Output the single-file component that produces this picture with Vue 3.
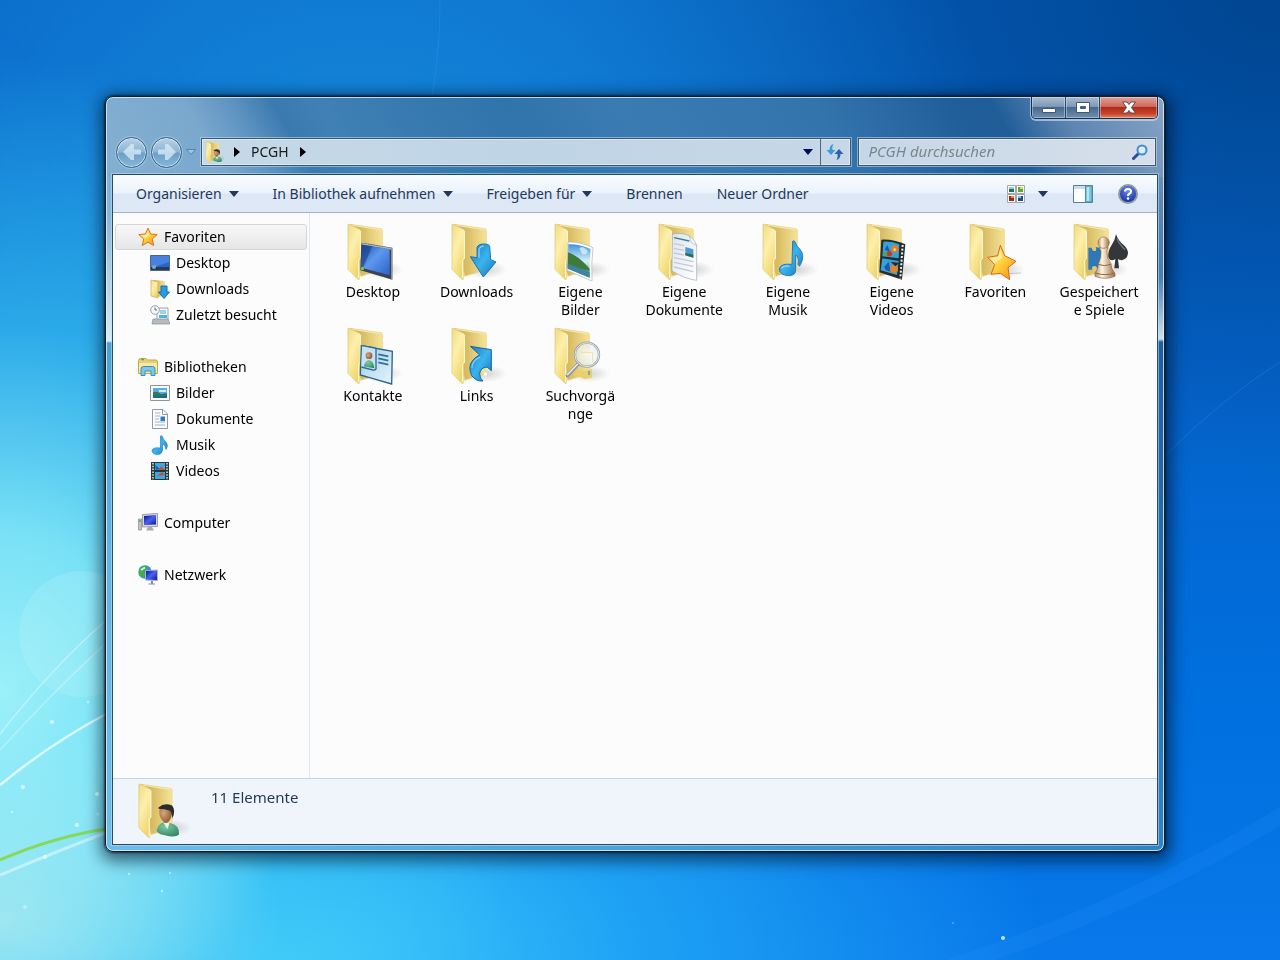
<script setup>
import { ref } from 'vue'

const query = ref('')

const commands = [
  { label: 'Organisieren', menu: true },
  { label: 'In Bibliothek aufnehmen', menu: true },
  { label: 'Freigeben für', menu: true },
  { label: 'Brennen', menu: false },
  { label: 'Neuer Ordner', menu: false },
]

const groups = [
  {
    label: 'Favoriten', icon: 'star', selected: true,
    children: [
      { label: 'Desktop', icon: 'desk' },
      { label: 'Downloads', icon: 'down' },
      { label: 'Zuletzt besucht', icon: 'recent' },
    ],
  },
  {
    label: 'Bibliotheken', icon: 'lib',
    children: [
      { label: 'Bilder', icon: 'pic' },
      { label: 'Dokumente', icon: 'doc' },
      { label: 'Musik', icon: 'note' },
      { label: 'Videos', icon: 'film' },
    ],
  },
  { label: 'Computer', icon: 'pc', children: [] },
  { label: 'Netzwerk', icon: 'net', children: [] },
]

const folders = [
  { label: 'Desktop', icon: 'f-desk' },
  { label: 'Downloads', icon: 'f-down' },
  { label: 'Eigene\nBilder', icon: 'f-pic' },
  { label: 'Eigene\nDokumente', icon: 'f-doc' },
  { label: 'Eigene\nMusik', icon: 'f-note' },
  { label: 'Eigene\nVideos', icon: 'f-film' },
  { label: 'Favoriten', icon: 'f-star' },
  { label: 'Gespeichert\ne Spiele', icon: 'f-game' },
  { label: 'Kontakte', icon: 'f-card' },
  { label: 'Links', icon: 'f-link' },
  { label: 'Suchvorgä\nnge', icon: 'f-find' },
]
</script>

<template>
  <svg class="defs" aria-hidden="true">
    <defs>
      <linearGradient id="gFlap" x1="0" y1="0" x2=".6" y2="1">
        <stop offset="0" stop-color="#f0d984" /><stop offset=".45" stop-color="#fdf0ac" /><stop offset="1" stop-color="#efd468" />
      </linearGradient>
      <linearGradient id="gBack" x1="0" y1="0" x2="1" y2="0">
        <stop offset="0" stop-color="#c9a848" /><stop offset=".45" stop-color="#dcc16a" /><stop offset="1" stop-color="#f5e498" />
      </linearGradient>
      <linearGradient id="gScreen" x1="0" y1="0" x2="1" y2="1">
        <stop offset="0" stop-color="#1c4fae" /><stop offset=".45" stop-color="#5e98ee" /><stop offset="1" stop-color="#2a62c8" />
      </linearGradient>
      <linearGradient id="gBlue" x1="0" y1="0" x2="1" y2="1">
        <stop offset="0" stop-color="#1a78bc" /><stop offset=".5" stop-color="#3ab4ee" /><stop offset="1" stop-color="#1572b8" />
      </linearGradient>
      <linearGradient id="gSky" x1="0" y1="0" x2="0" y2="1">
        <stop offset="0" stop-color="#3f93dc" /><stop offset=".5" stop-color="#d4effa" /><stop offset="1" stop-color="#4f94a8" />
      </linearGradient>
      <linearGradient id="gStar" x1="0" y1="0" x2="1" y2="1">
        <stop offset="0" stop-color="#fff6a0" /><stop offset=".5" stop-color="#ffd03a" /><stop offset="1" stop-color="#f58a14" />
      </linearGradient>
      <linearGradient id="gPawn" x1="0" y1="0" x2="1" y2="0">
        <stop offset="0" stop-color="#b08a62" /><stop offset=".35" stop-color="#fff6e2" /><stop offset="1" stop-color="#9a6a42" />
      </linearGradient>
      <linearGradient id="gPaper" x1="0" y1="0" x2="1" y2="1">
        <stop offset="0" stop-color="#dde4f0" /><stop offset="1" stop-color="#ffffff" />
      </linearGradient>
      <linearGradient id="gCard" x1="0" y1="0" x2="1" y2="1">
        <stop offset="0" stop-color="#9ecbe6" /><stop offset="1" stop-color="#e6f5fc" />
      </linearGradient>
      <linearGradient id="gNavy" x1="0" y1="0" x2="1" y2="1">
        <stop offset="0" stop-color="#0308a0" /><stop offset=".5" stop-color="#4a62ee" /><stop offset="1" stop-color="#0a0fa8" />
      </linearGradient>
      <radialGradient id="gHelp" cx=".5" cy=".3" r=".7">
        <stop offset="0" stop-color="#6c8ce8" /><stop offset="1" stop-color="#12299c" />
      </radialGradient>
      <radialGradient id="gLens">
        <stop offset="0" stop-color="#ffffff" stop-opacity=".75" /><stop offset="1" stop-color="#e4ecf2" stop-opacity=".7" />
      </radialGradient>
      <radialGradient id="gShade">
        <stop offset="0" stop-color="#777" stop-opacity=".3" /><stop offset="1" stop-color="#777" stop-opacity="0" />
      </radialGradient>
      <radialGradient id="gFace" cx=".35" cy=".4" r=".7">
        <stop offset="0" stop-color="#d9a87c" /><stop offset="1" stop-color="#8a5634" />
      </radialGradient>
      <radialGradient id="gShirt" cx=".4" cy=".3" r=".8">
        <stop offset="0" stop-color="#7cc8a2" /><stop offset="1" stop-color="#2f855c" />
      </radialGradient>
    </defs>

    <symbol id="folder" viewBox="0 0 204 174">
      <ellipse cx="128" cy="140" rx="64" ry="26" fill="url(#gShade)" />
      <path d="M34 4 126 17Q130 18 130 22V140L65 160Z" fill="url(#gBack)" stroke="#e8d27e" stroke-width="2" />
      <path d="M40 7 124 20" stroke="#f9edb4" stroke-width="3" />
      <path d="M27 5Q27 2 31 4L62 19Q66 21 66 26V106L61 112V168Q60 172 56 168L30 142Q27 140 27 136Z" fill="url(#gFlap)" stroke="#e0c46c" stroke-width="2" />
      <path d="M64 24V106L59 112V166" fill="none" stroke="#fffbe0" stroke-width="3" />
    </symbol>

    <symbol id="f-desk" viewBox="0 0 204 174">
      <path d="M67 59 160 74V170L64 142Z" fill="#3b4450" />
      <path d="M68 60 158 75V80L68 65Z" fill="#a9b3be" />
      <path d="M69 65 152 79V157L67 134Z" fill="url(#gScreen)" />
      <path d="M69 65 100 70 74 130 67 134Z" fill="#173c80" opacity=".6" />
      <path d="M156 76 160 76V169L156 168Z" fill="#8b95a0" />
      <circle cx="70" cy="137" r="5" fill="#7fc34a" />
    </symbol>
    <symbol id="f-down" viewBox="0 0 204 174">
      <path d="M102 104V74Q105 63 122 63 138 63 140 70L143 110 159 117 121 162 82 101Z" fill="url(#gBlue)" stroke="#1c74ae" stroke-width="3" />
      <path d="M108 104V78Q112 70 122 69" fill="none" stroke="#84d2f6" stroke-width="4" />
    </symbol>
    <symbol id="f-pic" viewBox="0 0 204 174">
      <path d="M66 57Q104 56 141 74 135 122 138 174L63 142Z" fill="#fff" stroke="#a8b2ba" stroke-width="2" />
      <path d="M67 64Q102 63 134 78 129 122 131 164L65 137Z" fill="url(#gSky)" />
      <path d="M66 88Q94 96 130 136L131 144Q96 134 65 134Z" fill="#3d7a3c" />
      <path d="M65 122 131 146V164L65 137Z" fill="#3e849c" />
      <path d="M100 76Q112 66 125 84 122 98 108 92Z" fill="#e9f7ff" opacity=".7" />
    </symbol>
    <symbol id="f-doc" viewBox="0 0 204 174">
      <path d="M67 33Q112 26 128 48L140 66V172Q106 168 66 144Z" fill="url(#gPaper)" stroke="#9fa8b4" stroke-width="2" />
      <path d="M118 40Q134 48 140 68L124 58Z" fill="#fff" stroke="#a6aeba" stroke-width="2" />
      <path d="M72 44 118 54" stroke="#35848a" stroke-width="4" />
      <path d="M72 62 102 68M72 76 102 82M72 90 102 96M72 104 130 116M72 118 130 130M72 132 130 146" stroke="#c3cad4" stroke-width="4" />
      <path d="M106 72 130 79V104L106 97Z" fill="#4a9ad4" /><path d="M106 90 130 95V104L106 97Z" fill="#2d6c4e" />
    </symbol>
    <symbol id="f-note" viewBox="0 0 204 174">
      <path d="M116 55Q121 50 124 58 127 70 137 78 154 96 140 124 136 134 132 124 136 104 125 96V142Q124 158 104 158 76 156 76 138 80 120 114 124Z" fill="url(#gBlue)" stroke="#2b7ab8" stroke-width="3" />
      <path d="M82 136Q90 126 106 130" stroke="#9bdcf8" stroke-width="4" fill="none" />
    </symbol>
    <symbol id="f-film" viewBox="0 0 204 174">
      <path d="M70 50Q106 48 142 64L132 170 64 148Z" fill="#252b2e" />
      <path d="M76 56Q102 54 124 64L122 106 73 100Z" fill="#34a4d8" />
      <path d="M73 106 122 114 117 156 68 142Z" fill="#34a4d8" />
      <path d="M80 80 88 66 96 86ZM78 132 92 116 98 146 84 142Z" fill="#2554b0" />
      <circle cx="110" cy="78" r="11" fill="#e87c28" /><circle cx="94" cy="92" r="8" fill="#c23829" />
      <circle cx="108" cy="138" r="12" fill="#e0852c" /><path d="M98 116 124 120 112 130Z" fill="#332526" />
      <circle cx="110" cy="80" r="4" fill="#fbe06c" /><circle cx="82" cy="92" r="6" fill="#58a348" />
      <path d="M134 66 127 166" stroke="#eef3f4" stroke-width="6" stroke-dasharray="6 5" />
    </symbol>
    <symbol id="f-star" viewBox="0 0 204 174">
      <path d="M130 152 180 150" stroke="#999" stroke-width="3" opacity=".5" />
      <path d="M118 67 131 98 165 115 141 134 146 170 118 151 90 154 101 125 80 103 110 98Z" fill="url(#gStar)" stroke="#d9641c" stroke-width="3" stroke-linejoin="round" />
      <path d="M118 78 124 104 100 122 88 106 112 102Z" fill="#fff8bc" opacity=".7" />
    </symbol>
    <symbol id="f-game" viewBox="0 0 204 174">
      <path d="M70 74H80Q82 86 92 84 96 80 92 72L112 76V140H98Q94 126 84 130 78 134 82 140H70Z" fill="#2f78b8" />
      <path d="M153 33Q158 52 180 70 194 86 186 102 174 118 159 108L162 136H148L151 108Q136 118 130 102 128 84 140 66 150 52 153 33Z" fill="#33363a" />
      <path d="M156 46Q162 64 180 80" stroke="#70757c" stroke-width="4" fill="none" />
      <path d="M103 74H129L125 84Q126 108 138 122L140 136 150 152V160Q120 172 90 160V150L98 136 100 122Q110 104 108 84Z" fill="url(#gPawn)" stroke="#8c6544" stroke-width="2" />
      <path d="M99 124Q118 132 138 124M92 150Q120 160 149 150" fill="none" stroke="#8f6844" stroke-width="3" />
      <circle cx="116" cy="59" r="17" fill="url(#gPawn)" stroke="#96704a" stroke-width="2" />
    </symbol>
    <symbol id="f-card" viewBox="0 0 204 174">
      <path d="M67 56 160 73 158 171 64 144Z" fill="url(#gCard)" stroke="#2a6590" stroke-width="4" />
      <path d="M70 56 108 63Q112 66 111 72V126Q108 130 102 129L67 120" fill="#c6e3f0" stroke="#2d6d98" stroke-width="4" />
      <circle cx="90" cy="86" r="10" fill="url(#gFace)" /><path d="M74 118Q80 100 90 100 104 102 106 124Z" fill="url(#gShirt)" />
      <path d="M118 82 148 88M118 94 148 101M118 106 148 113" stroke="#2f6fa0" stroke-width="5" />
    </symbol>
    <symbol id="f-link" viewBox="0 0 204 174">
      <path d="M82 58 145 68V131L132 120Q112 122 110 140 110 154 120 162 100 164 86 146 74 118 88 102 96 90 110 84Z" fill="url(#gBlue)" stroke="#1467a2" stroke-width="3" />
      <path d="M87 122Q86 102 112 90" fill="none" stroke="#8ad6f8" stroke-width="4" />
      <circle cx="127" cy="141" r="5" fill="#fff" />
    </symbol>
    <symbol id="f-find" viewBox="0 0 204 174">
      <path d="M80 142 138 126 138 152 116 156Z" fill="#e9d06a" />
      <path d="M129 132V144" stroke="#5ba0d4" stroke-width="5" />
      <path d="M96 112 64 146" stroke="#8e979d" stroke-width="11" stroke-linecap="round" />
      <path d="M96 110 64 143" stroke="#eef1f3" stroke-width="4" stroke-linecap="round" />
      <circle cx="123" cy="83" r="36" fill="url(#gLens)" stroke="#99a2a9" stroke-width="7" />
      <circle cx="123" cy="83" r="36" fill="none" stroke="#dfe4e7" stroke-width="3" />
      <path d="M104 76H140V104" fill="none" stroke="#ecdc92" stroke-width="3" opacity=".8" />
    </symbol>
    <symbol id="f-user" viewBox="0 0 204 174">
      <path d="M82 148Q88 124 106 122L124 124Q154 130 152 160 138 172 108 162 88 160 82 148Z" fill="url(#gShirt)" />
      <path d="M104 124 116 144 122 124Z" fill="#eef4f2" />
      <path d="M90 90Q90 72 110 72 130 74 130 96 126 120 112 124 92 118 90 90Z" fill="url(#gFace)" />
      <path d="M88 76Q106 60 130 70 144 86 130 112 132 96 124 86 108 80 88 80Z" fill="#2d2b2c" />
    </symbol>

    <symbol id="star" viewBox="0 0 20 20">
      <path d="M10 1 12.600 7 19.200 7.600 14.200 12 15.800 18.600 10 15.200 4.200 18.600 5.800 12 .8 7.600 7.400 7Z" fill="url(#gStar)" stroke="#e0731c" stroke-linejoin="round" />
      <path d="M10 4 11.500 8.500 7 11 4 8.700 8 8Z" fill="#fffad0" opacity=".7" />
    </symbol>
    <symbol id="desk" viewBox="0 0 20 20">
      <path d="M.5 2.500h19v15H.5Z" fill="#2a65cc" stroke="#51657c" /><path d="M1 3h18v6L1 15Z" fill="#5c94ee" opacity=".6" />
      <path d="M1 14h18v3H1Z" fill="#25385c" /><circle cx="4" cy="14" r="2" fill="#52b8e8" /><circle cx="5" cy="13" r="1" fill="#e88838" />
    </symbol>
    <symbol id="down" viewBox="0 0 20 20">
      <path d="M3 1 15 2V17L7 18Z" fill="url(#gBack)" /><path d="M1 1 8 3V19L1 17Z" fill="url(#gFlap)" stroke="#cfae55" stroke-width=".7" />
      <path d="M11 7h6v6h2.500L14 19.500 8.500 13H11Z" fill="#2b9be2" stroke="#176fae" />
    </symbol>
    <symbol id="recent" viewBox="0 0 20 20">
      <path d="M7 3H18V15H7Z" fill="#f5f8fa" stroke="#9ba4aa" /><path d="M10 6h6M10 8h6" stroke="#52a8dc" /><path d="M9 10h8v3H9Z" fill="#58b0e0" />
      <path d="M3 14H18L20 19H2Z" fill="#b6bbbf" stroke="#888f94" stroke-width=".7" />
      <circle cx="5" cy="5" r="4.300" fill="#f5f7f8" stroke="#9aa1a6" /><path d="M5 2.500V5H7" fill="none" stroke="#667" />
    </symbol>
    <symbol id="lib" viewBox="0 0 20 20">
      <path d="M.5 3.500Q.5 1.500 2.500 1.500H8L9.500 3H18Q19.500 3 19.500 5V16.500H.5Z" fill="#e8cf75" stroke="#c6a84c" />
      <path d="M1 6H19V16H1Z" fill="#f8e9a5" /><path d="M3 2.500H6" stroke="#53b34f" stroke-width="1.500" />
      <path d="M3 18.500V12Q3 9.500 5.500 9.500H14.500Q17 9.500 17 12V18.500H13V14H7V18.500Z" fill="#7cc8ea" stroke="#3d8db8" />
    </symbol>
    <symbol id="pic" viewBox="0 0 20 20">
      <path d="M.5 2.500h19v15H.5Z" fill="#fff" stroke="#8b949c" /><path d="M3 5h14v10H3Z" fill="#55b0ea" />
      <path d="M3 9Q8 8 11 11L17 10V13H3Z" fill="#357852" /><path d="M3 12.500H17V15H3Z" fill="#1c6a98" /><path d="M9 7h7v2H9Z" fill="#d5f0fa" />
    </symbol>
    <symbol id="doc" viewBox="0 0 20 20">
      <path d="M2.500 .5H13L17.500 5V19.500H2.500Z" fill="#fbfcfd" stroke="#919aa3" /><path d="M12.500 1V5.500H17" fill="none" stroke="#919aa3" />
      <path d="M5 4H10M5 7H10M5 10H9M5 13H15M5 16H15" stroke="#9fb0c8" /><path d="M10.500 7.500H15V12H10.500Z" fill="#307cc0" />
    </symbol>
    <symbol id="note" viewBox="0 0 20 20">
      <path d="M10.500 1Q12 0 12.500 2 13.500 5 16 7 18.500 10 16.500 14 15.800 15 15.500 13.500 15.800 10 12.500 9V15Q12 19.500 7 19.500 2 19 2 15.500 3 12 10.500 13Z" fill="url(#gBlue)" stroke="#2c86c6" stroke-width=".7" />
    </symbol>
    <symbol id="film" viewBox="0 0 20 20">
      <path d="M1 1H19V19H1Z" fill="#23383c" /><path d="M5 2H15V9H5ZM5 11H15V18H5Z" fill="#3fa8e0" />
      <path d="M9 9 11 5 15 9M7 15 12 11 15 14" fill="#c0532e" /><path d="M5 4 10 8 6 9Z" fill="#2358a8" />
      <path d="M3 2V19M17 2V19" stroke="#e3eef0" stroke-width="1.500" stroke-dasharray="1.500 1.300" />
    </symbol>
    <symbol id="pc" viewBox="0 0 20 20">
      <path d="M.5 6H3.500V17H.5Z" fill="#c2c5c8" stroke="#878c90" stroke-width=".7" /><path d="M1 8H3" stroke="#49bb3c" stroke-width="1.500" />
      <path d="M4.500 1.500 19.500 .5V13.500L4.500 14Z" fill="#d5d8dc" stroke="#9ca1a8" /><path d="M6 3 18 2V11.500L6 12Z" fill="url(#gNavy)" />
      <path d="M10 14h4l2 3.500H8Z" fill="#a7acb0" />
    </symbol>
    <symbol id="net" viewBox="0 0 20 20">
      <circle cx="7" cy="7" r="6.700" fill="#2f8ee0" /><path d="M2 3Q7-1 10 2L6 6 8 10 5 13Q0 10 1 6Z" fill="#3fb045" /><path d="M3 5 7 2.500" stroke="#dfffd8" stroke-width="2" />
      <path d="M7.500 5.500 19.500 5V15.500L7.500 15Z" fill="url(#gNavy)" stroke="#a9b4d4" /><path d="M13 16h2v2.500h2v1H10.500v-1H13Z" fill="#868c98" />
    </symbol>
  </svg>

  <main class="desktop">
    <svg class="wallpaper" viewBox="0 0 1280 960" preserveAspectRatio="none" aria-hidden="true">
      <circle cx="82" cy="634" r="63" fill="#c6f6fa" opacity=".22" />
      <g fill="none" stroke="#e5fcff">
        <path d="M0 734Q50 670 104 622" stroke-width="1.500" opacity=".5" />
        <path d="M0 750Q50 695 104 645" stroke-width="1.500" opacity=".4" />
        <path d="M0 785Q50 744 106 714" stroke-width="2.500" opacity=".9" />
        <path d="M0 875Q60 850 108 832" stroke-width="3" opacity=".55" />
        <path d="M1165 456Q1220 400 1280 362" stroke="#48a0f0" opacity=".25" />
        <path d="M940 970Q1130 910 1290 810" stroke="#3aa0ff" stroke-width="16" opacity=".12" />
        <path d="M440 0Q440 50 432 96" stroke="#50b0f0" opacity=".2" />
      </g>
      <path d="M0 860Q55 836 112 828" fill="none" stroke="#86d95c" stroke-width="3" />
      <g fill="#f2feff" opacity=".8">
        <circle cx="52" cy="722" r="2" /><circle cx="23" cy="787" r="2" /><circle cx="97" cy="794" r="2" />
        <circle cx="77" cy="825" r="2" /><circle cx="45" cy="857" r="2" /><circle cx="25" cy="907" r="2" opacity=".5" />
        <circle cx="88" cy="702" r="1.500" opacity=".6" /><circle cx="98" cy="814" r="1.500" opacity=".6" />
        <circle cx="129" cy="874" r="1" /><circle cx="170" cy="873" r="1" /><circle cx="162" cy="891" r="1" />
        <circle cx="1003" cy="938" r="2" /><circle cx="953" cy="923" r="1" opacity=".4" /><circle cx="12" cy="812" r="1" />
      </g>
    </svg>

    <section class="window" aria-label="PCGH">
      <header class="caption">
        <div class="caption-buttons">
          <button class="cap" type="button" aria-label="Minimieren">
            <svg width="16" height="14" viewBox="0 0 16 14"><path d="M1.500 7.500h13v4h-13Z" fill="#fff" stroke="#46566c" /></svg>
          </button>
          <button class="cap" type="button" aria-label="Maximieren">
            <svg width="16" height="14" viewBox="0 0 16 14"><path d="M1.500 1.500h13v10h-13Z M5.500 5.500v2h5v-2Z" fill="#fff" fill-rule="evenodd" stroke="#46566c" /></svg>
          </button>
          <button class="cap close" type="button" aria-label="Schließen">
            <svg width="16" height="14" viewBox="0 0 16 14"><path d="M1.500 1H6L8 3.500 10 1H14.500L10.500 6.500 14.500 12H10L8 9.500 6 12H1.500L5.500 6.500Z" fill="#fff" stroke="#5a4a54" /></svg>
          </button>
        </div>
      </header>

      <div class="nav">
        <div class="travel">
          <button class="round" type="button" aria-label="Zurück">
            <svg width="20" height="20" viewBox="0 0 20 20"><path d="M9 2 1 10 9 18H12V12.500H19V7.500H12V2Z" fill="#d5e8f5" opacity=".8" /></svg>
          </button>
          <button class="round" type="button" aria-label="Vorwärts">
            <svg width="20" height="20" viewBox="0 0 20 20"><path d="M11 2 19 10 11 18H8V12.500H1V7.500H8V2Z" fill="#d5e8f5" opacity=".8" /></svg>
          </button>
          <button class="plain" type="button" aria-label="Zuletzt besuchte Seiten">
            <svg width="10" height="6" viewBox="0 0 10 6"><path d="M.5 .5H9.500L5 5.500Z" fill="#9cc6e2" stroke="#4d86b0" /></svg>
          </button>
        </div>
        <div class="address">
          <div class="crumbs">
            <svg class="mini" viewBox="20 0 140 174"><use href="#folder" width="204" height="174" /><use href="#f-user" width="204" height="174" /></svg>
            <svg width="6" height="10" viewBox="0 0 6 10"><path d="M0 0 6 5 0 10Z" fill="#000" /></svg>
            <a href="#" class="crumb">PCGH</a>
            <svg width="6" height="10" viewBox="0 0 6 10"><path d="M0 0 6 5 0 10Z" fill="#000" /></svg>
          </div>
          <button class="plain drop" type="button" aria-label="Vorherige Orte">
            <svg width="10" height="6" viewBox="0 0 10 6"><path d="M0 0H10L5 6Z" fill="#0a0a5c" /></svg>
          </button>
          <button class="plain refresh" type="button" aria-label="Aktualisieren">
            <svg width="18" height="16" viewBox="0 0 18 16">
              <path d="M7.500 0Q3.500 1 3.500 6H.5L5 11 9.500 6H6.500Q6 2 7.500 0Z" fill="#3c9ada" /><path d="M10.500 16Q14.500 15 14.500 10H17.500L13 5 8.500 10H11.500Q12 14 10.500 16Z" fill="#2b62ae" />
            </svg>
          </button>
        </div>
        <label class="search">
          <input v-model="query" type="text" placeholder="PCGH durchsuchen" aria-label="PCGH durchsuchen" />
          <svg width="16" height="16" viewBox="0 0 16 16"><path d="M6.500 9.500 1.500 14.500" stroke="#2a4f9c" stroke-width="3" stroke-linecap="round" /><circle cx="10" cy="6" r="4.500" fill="#d9ecf8" stroke="#3f8fd0" stroke-width="2" /></svg>
        </label>
      </div>

      <div class="client">
        <div class="toolbar">
          <button v-for="c in commands" :key="c.label" class="plain command" type="button">
            {{ c.label }}
            <svg v-if="c.menu" width="10" height="6" viewBox="0 0 10 6"><path d="M0 0H10L5 6Z" fill="#1e395b" /></svg>
          </button>
          <div class="tools">
            <button class="plain view" type="button" aria-label="Ansicht ändern">
              <svg width="20" height="20" viewBox="0 0 20 20">
                <path d="M1.500 1.500h8v8h-8ZM10.500 1.500h8v8h-8ZM1.500 10.500h8v8h-8ZM10.500 10.500h8v8h-8Z" fill="#fff" stroke="#a0a8b4" />
                <path d="M3 3h5v2H3Z" fill="#8cc9ea" /><path d="M3 5h5v3H3Z" fill="#267258" /><path d="M12 3h5v5h-5Z" fill="#57a640" /><path d="M14 3h3v2H14Z" fill="#e8d53a" />
                <path d="M3 12h5v5H3Z" fill="#a2261c" /><path d="M5 12h3v2H5Z" fill="#ee8c24" /><path d="M12 12h5v5h-5Z" fill="#2b4a7a" /><path d="M12 12h3v2H12Z" fill="#8ac0e4" />
              </svg>
              <svg width="10" height="6" viewBox="0 0 10 6"><path d="M0 0H10L5 6Z" fill="#1e395b" /></svg>
            </button>
            <button class="plain" type="button" aria-label="Vorschaufenster">
              <svg width="20" height="18" viewBox="0 0 20 18"><path d="M.5 .5h19v17H.5Z" fill="#fdfefe" stroke="#5a7d98" /><path d="M1 1H12V4H1Z" fill="#cfdbe6" /><path d="M12.500 1H19V17H12.500Z" fill="#7cc8e2" stroke="#488fae" /><path d="M14 2h2v14H14Z" fill="#b6e6f4" /></svg>
            </button>
            <button class="plain" type="button" aria-label="Hilfe">
              <svg width="20" height="20" viewBox="0 0 20 20"><circle cx="10" cy="10" r="9" fill="url(#gHelp)" stroke="#8f98a6" stroke-width="2" /><path d="M7 7.500Q7 5 10 5 13 5 13 7.500 13 9 11 10 10 10.500 10 12" fill="none" stroke="#fff" stroke-width="2" /><circle cx="10" cy="14.500" r="1.300" fill="#fff" /></svg>
            </button>
          </div>
        </div>

        <div class="body">
          <nav class="tree">
            <div v-for="g in groups" :key="g.label" class="group">
              <a href="#" class="node" :class="{ selected: g.selected }">
                <svg width="20" height="20"><use :href="'#' + g.icon" /></svg>{{ g.label }}
              </a>
              <a v-for="n in g.children" :key="n.label" href="#" class="node child">
                <svg width="20" height="20"><use :href="'#' + n.icon" /></svg>{{ n.label }}
              </a>
            </div>
          </nav>
          <div class="files">
            <a v-for="f in folders" :key="f.label" href="#" class="file">
              <svg width="68" height="58"><use href="#folder" /><use :href="'#' + f.icon" /></svg>
              <span>{{ f.label }}</span>
            </a>
          </div>
        </div>

        <footer class="details">
          <svg width="66" height="56" viewBox="0 0 204 174"><use href="#folder" width="204" height="174" /><use href="#f-user" width="204" height="174" /></svg>
          <span>11 Elemente</span>
        </footer>
      </div>
    </section>
  </main>
</template>

<style>
html, body { margin: 0; height: 100%; }
</style>

<style scoped>
.defs { position: absolute; width: 0; height: 0; }
.desktop {
  position: relative;
  box-sizing: border-box;
  min-height: 100vh;
  padding: 96px 115px 108px 105px;
  display: flex;
  font: 14px/18px "Noto Sans", "Open Sans", sans-serif;
  color: #000;
  background:
    radial-gradient(ellipse 22% 20% at 0% 96%, rgba(176, 236, 240, .75) 0%, rgba(140, 230, 245, 0) 100%),
    radial-gradient(ellipse 42% 66% at 0% 72%, #9cf0f9 0%, rgba(130, 234, 248, .92) 25%, rgba(60, 200, 245, .6) 58%, rgba(30, 160, 240, 0) 100%),
    radial-gradient(ellipse 60% 40% at 22% 100%, rgba(70, 208, 252, .95) 0%, rgba(40, 180, 250, .7) 45%, rgba(20, 150, 245, 0) 100%),
    radial-gradient(ellipse 52% 80% at 28% 34%, rgba(30, 155, 228, .8) 0%, rgba(20, 130, 220, 0) 100%),
    radial-gradient(ellipse 55% 50% at 100% 0%, #004590 0%, rgba(0, 72, 160, 0) 100%),
    linear-gradient(180deg, #0560c4 0%, #0464cc 40%, #0070e0 75%, #0878ea 100%);
}
.wallpaper { position: absolute; inset: 0; width: 100%; height: 100%; }

.window {
  position: relative;
  flex: 1;
  min-width: 0;
  box-sizing: border-box;
  display: flex;
  flex-direction: column;
  padding: 0 6px 6px;
  border: 1px solid #14202c;
  border-radius: 8px;
  box-shadow: inset 0 0 0 1px rgba(230, 245, 255, .75), 0 0 2px 1px rgba(0, 10, 25, .6), 1px 4px 16px 5px rgba(0, 15, 35, .6);
  background:
    linear-gradient(60deg, #83b0d2 0%, #7aa8cd 11%, #6095c2 15%, #3b7aaf 19%, #4080b4 23%, #2f74ab 40%, #3a7bb2 50%, #3474ad 68%, #215f9b 80%, #1f5c98 84%, #5d85b1 90%, #8aa4c6 100%) 0 0 / 100% 80px no-repeat,
    linear-gradient(180deg, #6ea5cc 0, #8cb6d6 120px, #d8ecf6 244px, #4ba0d0 246px, #62b2e2 460px, #70bce8 100%) 0 0 / 12px 100% no-repeat,
    linear-gradient(180deg, #7f9fc2 0, #5682b2 130px, #4a7eb4 180px, #d0dfec 242px, #1c60a2 245px, #2870b4 70%, #2f84c4 100%) 100% 0 / 12px 100% no-repeat,
    linear-gradient(90deg, #70bce8, #4ea8de 40%, #2f84c4);
}
.caption { display: flex; justify-content: flex-end; height: 40px; }
.caption-buttons {
  display: flex;
  height: 21px;
  border: 1px solid #16314f;
  border-top: 0;
  border-radius: 0 0 5px 5px;
  box-shadow: 0 1px 0 1px rgba(215, 232, 245, .6);
  overflow: hidden;
}
.cap {
  width: 34px;
  padding: 0;
  border: 0;
  border-right: 1px solid #2a4868;
  display: grid;
  place-items: center;
  background: linear-gradient(#a9bacf 0, #7f99b8 45%, #49698d 50%, #6f8fb2 100%);
  box-shadow: inset 0 0 0 1px rgba(255, 255, 255, .35);
}
.close { width: 57px; border-right: 0; background: linear-gradient(#dfa198 0, #cd6b5a 45%, #b02a17 50%, #c8452c 80%, #e08a66 100%); }

.nav { display: flex; align-items: center; gap: 7px; height: 30px; margin-bottom: 7px; padding: 0 2px 0 4px; }
.travel { display: flex; align-items: center; gap: 4px; width: 78px; }
.round {
  box-sizing: border-box;
  flex: none;
  width: 31px;
  height: 31px;
  padding: 0;
  display: grid;
  place-items: center;
  border: 1px solid #3c6688;
  border-radius: 50%;
  background: linear-gradient(#b8d2e6 0, #8db5d4 48%, #6a9fc6 52%, #86b8da 100%);
  box-shadow: inset 0 0 0 1px rgba(235, 246, 255, .65), 0 0 1px 1px rgba(190, 220, 240, .5);
}
.plain { padding: 0; border: 0; background: none; font: inherit; color: inherit; display: flex; align-items: center; }
.address, .search {
  box-sizing: border-box;
  display: flex;
  height: 28px;
  border: 1px solid #3f5a70;
  background: linear-gradient(90deg, #c5d9e8, #bfd4e5 50%, #c6d8e8);
  box-shadow: 0 0 0 1px rgba(190, 220, 240, .55), inset 0 0 0 1px rgba(235, 245, 252, .5);
}
.address { flex: 649 1 0; }
.search { flex: 280 1 0; align-items: center; min-width: 0; padding: 0 7px 0 10px; background: linear-gradient(90deg, #c5d7e6, #d6dfea); }
.search input { flex: 1; min-width: 0; padding: 0; border: 0; outline: 0; background: none; font: inherit; color: #222; }
.search input::placeholder { color: #7d858d; font-size: 15px; font-style: italic; opacity: 1; }
.crumbs { flex: 1; display: flex; align-items: center; gap: 11px; padding-left: 2px; }
.mini { width: 20px; height: 22px; margin-right: -1px; }
.crumb { color: #1a1a1a; text-decoration: none; }
.drop { width: 24px; justify-content: center; }
.refresh { width: 30px; justify-content: center; border-left: 1px solid #4d687e; }

.client {
  flex: 1;
  min-height: 0;
  display: flex;
  flex-direction: column;
  border: 1px solid #254a6c;
  box-shadow: 0 0 0 1px rgba(190, 225, 245, .55);
  background: #fcfcfc;
}
.toolbar {
  flex: none;
  box-sizing: border-box;
  display: flex;
  align-items: center;
  gap: 34px;
  height: 38px;
  padding: 0 19px 0 23px;
  color: #1e395b;
  border-bottom: 1px solid #a3b4ca;
  background: linear-gradient(#fbfdff 0, #eaf2fb 48%, #dce7f5 52%, #dfe9f6 100%);
}
.command { gap: 7px; white-space: nowrap; }
.tools { display: flex; align-items: center; gap: 25px; margin-left: auto; }
.view { gap: 12px; }

.body { flex: 1; min-height: 0; display: flex; }
.tree {
  flex: none;
  box-sizing: border-box;
  width: 197px;
  padding: 11px 2px;
  border-right: 1px solid #dbe7f5;
}
.group { display: flex; flex-direction: column; margin-bottom: 26px; }
.node {
  box-sizing: border-box;
  display: flex;
  align-items: center;
  gap: 6px;
  height: 26px;
  padding-left: 22px;
  border: 1px solid transparent;
  border-radius: 3px;
  color: #000;
  text-decoration: none;
}
.child { padding-left: 34px; }
.selected { border-color: #d6d6d6; background: linear-gradient(#f8f8f8, #e6e6e6); }
.files {
  flex: 1;
  display: grid;
  grid-template-columns: repeat(auto-fill, minmax(103px, 1fr));
  grid-auto-rows: minmax(104px, auto);
  align-content: start;
  padding: 10px 6px 10px 11px;
}
.file { display: flex; flex-direction: column; align-items: center; gap: 2px; color: #000; text-align: center; text-decoration: none; }
.file span { white-space: pre-line; }
.details {
  flex: none;
  box-sizing: border-box;
  display: flex;
  height: 66px;
  gap: 15px;
  padding: 4px 17px;
  color: #1e395b;
  font-size: 15px;
  border-top: 1px solid #c4d3e6;
  background: #f0f4fb;
}
.details span { padding-top: 5px; }
</style>
